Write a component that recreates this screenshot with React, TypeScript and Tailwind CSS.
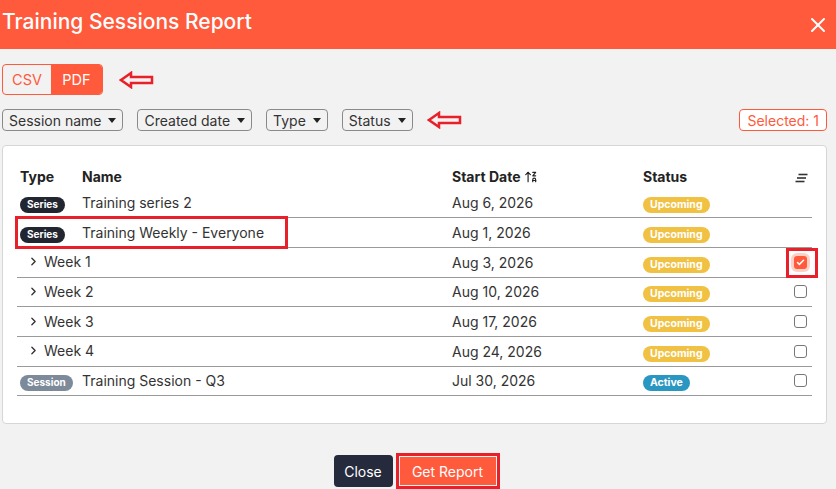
import { ArrowUpZA, ChevronRight, X, Check } from "lucide-react";

type Row = {
  kind: "series" | "session" | "child";
  name: string;
  date: string;
  status: "Upcoming" | "Active";
  checkbox: boolean;
  checked?: boolean;
};

const rows: Row[] = [
  { kind: "series", name: "Training series 2", date: "Aug 6, 2026", status: "Upcoming", checkbox: false },
  { kind: "series", name: "Training Weekly - Everyone", date: "Aug 1, 2026", status: "Upcoming", checkbox: false },
  { kind: "child", name: "Week 1", date: "Aug 3, 2026", status: "Upcoming", checkbox: true, checked: true },
  { kind: "child", name: "Week 2", date: "Aug 10, 2026", status: "Upcoming", checkbox: true },
  { kind: "child", name: "Week 3", date: "Aug 17, 2026", status: "Upcoming", checkbox: true },
  { kind: "child", name: "Week 4", date: "Aug 24, 2026", status: "Upcoming", checkbox: true },
  { kind: "session", name: "Training Session - Q3", date: "Jul 30, 2026", status: "Active", checkbox: true },
];

function LeftArrow() {
  return (
    <svg width="36" height="18" viewBox="0 0 36 18" fill="none">
      <path d="M2 9 L12 2 L12 6 L33 6 L33 12 L12 12 L12 16 Z" stroke="#e8202a" strokeWidth="2.5" strokeLinejoin="miter" />
    </svg>
  );
}

function Dropdown({ label }: { label: string }) {
  return (
    <button className="flex h-[22px] items-center gap-[7px] rounded-[4px] border border-[#8a8a8a] bg-transparent px-[6px] text-[14px] text-[#333]">
      <span>{label}</span>
      <span className="h-0 w-0 border-x-[4px] border-t-[5px] border-x-transparent border-t-[#222]" />
    </button>
  );
}

function ColumnsIcon() {
  return (
    <svg width="13" height="10" viewBox="0 0 13 10" fill="none">
      <path d="M3.5 1.5 H12.5" stroke="#333" strokeWidth="1.6" />
      <path d="M2 5 H11" stroke="#333" strokeWidth="1.6" />
      <path d="M0.5 8.5 H9.5" stroke="#333" strokeWidth="1.6" />
    </svg>
  );
}

function Badge({ kind }: { kind: Row["kind"] }) {
  if (kind === "series")
    return (
      <span className="inline-flex h-[16px] items-center rounded-full bg-[#212631] px-[7px] text-[10px] font-bold text-white">
        Series
      </span>
    );
  return (
    <span className="inline-flex h-[16px] items-center rounded-full bg-[#7c8a9a] px-[7px] text-[10px] font-bold text-white">
      Session
    </span>
  );
}

function StatusBadge({ status }: { status: Row["status"] }) {
  const cls = status === "Upcoming" ? "bg-[#f0c142]" : "bg-[#2a97c2]";
  return (
    <span className={`inline-flex h-[16px] items-center rounded-full px-[7px] text-[10.5px] font-bold text-white ${cls}`}>
      {status}
    </span>
  );
}

function Checkbox({ checked }: { checked?: boolean }) {
  if (checked)
    return (
      <span className="flex h-[13px] w-[13px] items-center justify-center rounded-[3px] bg-[#ff5a3c] shadow-[0_0_0_3px_#ffd1c6]">
        <Check size={9} strokeWidth={4} color="white" />
      </span>
    );
  return <span className="block h-[13px] w-[13px] rounded-[3px] border border-[#777] bg-white" />;
}

export default function App() {
  return (
    <div
      className="relative h-[489px] w-[836px] overflow-hidden bg-[#f2f2f2]"
      style={{ fontFamily: "Inter, 'Liberation Sans', sans-serif" }}
    >
      {/* Header */}
      <div className="flex h-[49px] items-center justify-between bg-[#ff5a3c] pb-[6px] pl-[2px] pr-[6px]">
        <h1 className="text-[21px] font-medium text-white">Training Sessions Report</h1>
        <X size={24} strokeWidth={2} color="white" className="mt-[6px]" />
      </div>

      <div className="pl-[2px] pr-[9px]">
        {/* Export format */}
        <div className="mt-[15px] flex items-center gap-[16px]">
          <div className="flex h-[31px] overflow-hidden rounded-[4px] border border-[#ff5a3c] text-[14.5px]">
            <span className="flex w-[48px] items-center justify-center text-[#ff5a3c]">CSV</span>
            <span className="flex w-[51px] items-center justify-center bg-[#ff5a3c] text-white">PDF</span>
          </div>
          <LeftArrow />
        </div>

        {/* Filters */}
        <div className="mt-[14px] flex items-center">
          <div className="flex items-center gap-[14px]">
            <Dropdown label="Session name" />
            <Dropdown label="Created date" />
            <Dropdown label="Type" />
            <Dropdown label="Status" />
            <LeftArrow />
          </div>
          <span className="ml-auto flex h-[22px] items-center rounded-[4px] border border-[#ff5a3c] bg-white px-[7px] text-[14px] text-[#ff5a3c]">
            Selected: 1
          </span>
        </div>

        {/* Table card */}
        <div className="mt-[14px] h-[279px] rounded-[4px] border border-[#d6d6d6] bg-white px-[14px] pt-[14px]">
          <table className="w-full border-collapse text-[14px] text-[#333]">
            <thead>
              <tr className="h-[28px] text-left text-[#222]">
                <th className="w-[65px] pb-[1px] pl-[3px] align-bottom font-bold">Type</th>
                <th className="w-[370px] pb-[1px] align-bottom font-bold">Name</th>
                <th className="w-[191px] pb-[1px] align-bottom font-bold">
                  <span className="inline-flex items-center gap-[4px]">
                    Start Date <ArrowUpZA size={14} strokeWidth={2} />
                  </span>
                </th>
                <th className="pb-[1px] align-bottom font-bold">Status</th>
                <th className="w-[30px] pb-[5px] align-bottom">
                  <div className="flex justify-end pr-[4px]">
                    <ColumnsIcon />
                  </div>
                </th>
              </tr>
            </thead>
            <tbody>
              {rows.map((r) => (
                <tr key={r.name} className="h-[29.7px] border-b border-[#9a9a9a]">
                  {r.kind === "child" ? (
                    <td colSpan={2} className="pl-[10px]">
                      <span className="inline-flex items-center gap-[4px]">
                        <ChevronRight size={13} strokeWidth={2.5} color="#333" />
                        {r.name}
                      </span>
                    </td>
                  ) : (
                    <>
                      <td className="pl-[3px]">
                        <Badge kind={r.kind} />
                      </td>
                      <td>{r.name}</td>
                    </>
                  )}
                  <td>{r.date}</td>
                  <td>
                    <StatusBadge status={r.status} />
                  </td>
                  <td>
                    <div className="flex justify-end pr-[5px]">
                      {r.checkbox && <Checkbox checked={r.checked} />}
                    </div>
                  </td>
                </tr>
              ))}
            </tbody>
          </table>
        </div>

        {/* Footer */}
        <div className="mt-[29px] flex items-center justify-center gap-[3px] pl-[4px]">
          <button className="h-[32px] w-[59px] rounded-[4px] bg-[#252a3c] text-[14px] text-white">Close</button>
          <div className="border-[3px] border-[#e8202a] p-[1px]">
            <button className="h-[28px] w-[96px] bg-[#ff5a3c] text-[14px] text-white">Get Report</button>
          </div>
        </div>
      </div>

      {/* Annotation boxes */}
      <div className="pointer-events-none absolute left-[15px] top-[216px] h-[33px] w-[273px] border-[3px] border-[#e8202a]" />
      <div className="pointer-events-none absolute left-[786px] top-[248px] h-[30px] w-[32px] border-[3px] border-[#e8202a]" />
    </div>
  );
}
